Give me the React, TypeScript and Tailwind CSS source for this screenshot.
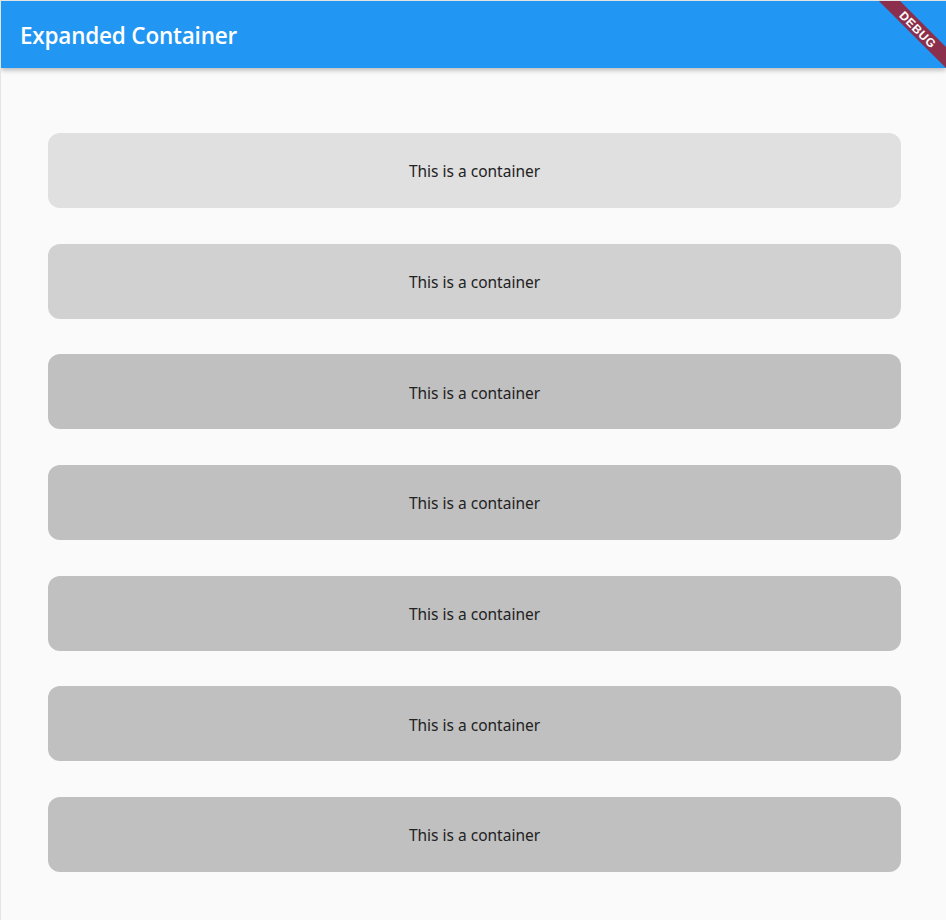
import React from 'react';

const shades = ['bg-[#e0e0e0]', 'bg-[#d1d1d1]', 'bg-[#c0c0c0]', 'bg-[#c0c0c0]', 'bg-[#c0c0c0]', 'bg-[#c0c0c0]', 'bg-[#c0c0c0]'];

export default function App() {
  return (
    <div className="relative w-[946px] h-[920px] overflow-hidden bg-[#fafafa] border-t border-l border-[#e4e4e4] font-['Open_Sans',sans-serif]">
      {/* App bar */}
      <header className="h-[67px] bg-[#2196f3] flex items-center px-[19px] pt-[3px] shadow-[0_2px_5px_rgba(0,0,0,0.28)] relative z-10">
        <h1 className="text-white text-[22.5px] font-semibold tracking-[-0.2px]">Expanded Container</h1>
      </header>

      {/* Containers */}
      <div className="flex flex-col gap-[35.67px] pt-[65px] pl-[47px] pr-[45px]">
        {shades.map((bg, i) => (
          <div key={i} className={`h-[75px] rounded-[12px] flex items-center justify-center pt-[3px] ${bg}`}>
            <span className="text-[15.5px] text-[#222] font-['Noto_Sans',sans-serif]">This is a container</span>
          </div>
        ))}
      </div>

      {/* Debug banner */}
      <div className="absolute left-[857px] top-[21px] w-[120px] h-[15px] rotate-45 bg-[#8b2f4c] flex items-center justify-center z-20">
        <span className="text-white text-[12px] font-black leading-none tracking-[0.6px] font-['Liberation_Sans',sans-serif]">DEBUG</span>
      </div>
    </div>
  );
}
